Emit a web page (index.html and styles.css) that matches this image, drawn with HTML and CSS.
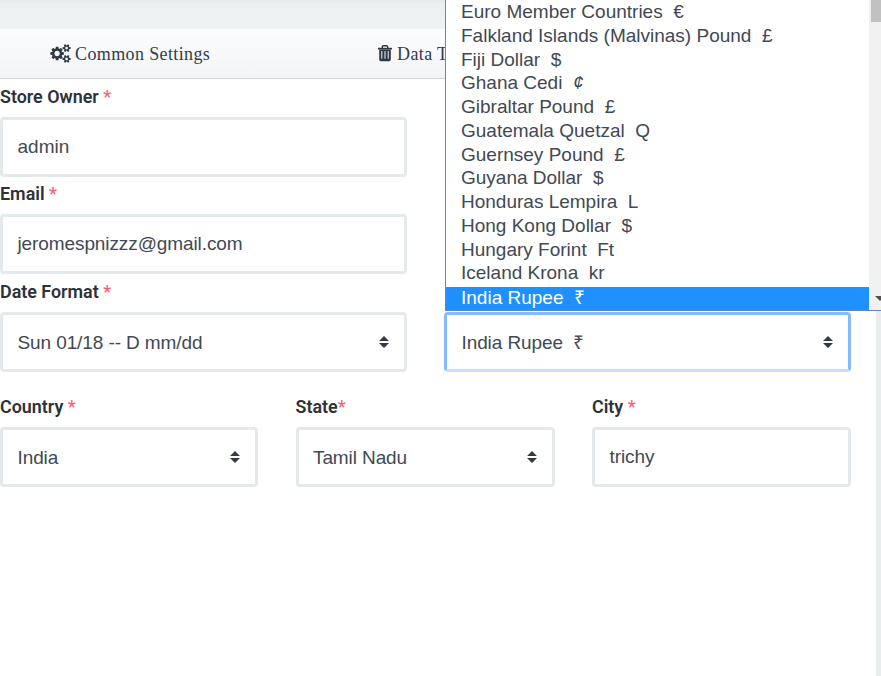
FILE: index.html
```html
<!DOCTYPE html>
<html lang="en">
<head>
<meta charset="utf-8">
<title>Common Settings</title>
<link rel="stylesheet" href="styles.css">
</head>
<body>
<main class="page">
  <div class="band"></div>
  <nav class="tabs">
    <a class="tab"><svg class="cogs" viewBox="0 0 1920 1792"><path d="M896 896q0-106-75-181t-181-75-181 75-75 181 75 181 181 75 181-75 75-181zm768 512q0-52-38-90t-90-38-90 38-38 90q0 53 37.500 90.500t90.500 37.500 90.500-37.500 37.500-90.500zm0-1024q0-52-38-90t-90-38-90 38-38 90q0 53 37.500 90.500t90.500 37.500 90.500-37.500 37.500-90.500zm-384 421v185q0 10-7 19.500t-16 10.500l-155 24q-11 35-32 76 34 48 90 115 7 11 7 20 0 12-7 19-23 30-82.500 89.500t-78.500 59.500q-11 0-21-7l-115-90q-37 19-77 31-11 108-23 155-7 24-30 24h-186q-11 0-20-7.500t-10-17.500l-23-153q-34-10-75-31l-118 89q-7 7-20 7-11 0-21-8-144-133-144-160 0-9 7-19 10-14 41-53t47-61q-23-44-35-82l-152-24q-10-1-17-9.500t-7-19.500v-185q0-10 7-19.500t16-10.500l155-24q11-35 32-76-34-48-90-115-7-11-7-20 0-12 7-20 22-30 82-89t79-59q11 0 21 7l115 90q34-18 77-32 11-108 23-154 7-24 30-24h186q11 0 20 7.500t10 17.500l23 153q34 10 75 31l118-89q8-7 20-7 11 0 21 8 144 133 144 160 0 8-7 19-12 16-42 54t-45 60q23 48 34 82l152 23q10 2 17 10.500t7 19.500zm640 533v140q0 16-149 31-12 27-30 52 51 113 51 138 0 4-4 7-122 71-124 71-8 0-46-47t-52-68q-20 2-30 2t-30-2q-14 21-52 68t-46 47q-2 0-124-71-4-3-4-7 0-25 51-138-18-25-30-52-149-15-149-31v-140q0-16 149-31 13-29 30-52-51-113-51-138 0-4 4-7 4-2 35-20t59-34 30-16q8 0 46 46.500t52 67.500q20-2 30-2t30 2q51-71 92-112l6-2q4 0 124 70 4 3 4 7 0 25-51 138 17 23 30 52 149 15 149 31zm0-1024v140q0 16-149 31-12 27-30 52 51 113 51 138 0 4-4 7-122 71-124 71-8 0-46-47t-52-68q-20 2-30 2t-30-2q-14 21-52 68t-46 47q-2 0-124-71-4-3-4-7 0-25 51-138-18-25-30-52-149-15-149-31v-140q0-16 149-31 13-29 30-52-51-113-51-138 0-4 4-7 4-2 35-20t59-34 30-16q8 0 46 46.500t52 67.500q20-2 30-2t30 2q51-71 92-112l6-2q4 0 124 70 4 3 4 7 0 25-51 138 17 23 30 52 149 15 149 31z"/></svg><span class="tab-text">Common Settings</span></a>
    <a class="tab"><svg class="trash" viewBox="0 0 14 17"><path class="line" d="M4.300 3V2Q4.300.8 5.500.8H8.500Q9.700.8 9.700 2V3"/><path d="M0 2.800H14V4.500H0z"/><path fill-rule="evenodd" d="M1.200 4.500H12.800V14.500Q12.800 16.300 11.200 16.300H2.800Q1.200 16.300 1.200 14.500zM3.300 6V13.800H4.300V6zM6.500 6V13.800H7.500V6zM9.700 6V13.800H10.700V6z"/></svg><span class="tab-text">Data Tax</span></a>
  </nav>
  <form class="form">
    <div class="row halves">
      <div class="column">
        <div class="field"><label>Store Owner <b>*</b></label><div class="box"><span>admin</span></div></div>
        <div class="field"><label>Email <b>*</b></label><div class="box"><span class="tight">jeromespnizzz@gmail.com</span></div></div>
        <div class="field"><label>Date Format <b>*</b></label><div class="box select"><span class="tight">Sun 01/18 -- D mm/dd</span><svg class="arrows" viewBox="0 0 10 12"><path d="M0 5 5 0 10 5zM0 7H10L5 12z"/></svg></div></div>
      </div>
      <div class="column currency">
        <div class="box select focus"><span class="tight">India Rupee &nbsp;₹</span><svg class="arrows" viewBox="0 0 10 12"><path d="M0 5 5 0 10 5zM0 7H10L5 12z"/></svg></div>
      </div>
    </div>
    <div class="row thirds">
      <div class="field"><label>Country <b>*</b></label><div class="box select"><span class="tight">India</span><svg class="arrows" viewBox="0 0 10 12"><path d="M0 5 5 0 10 5zM0 7H10L5 12z"/></svg></div></div>
      <div class="field"><label>State<b>*</b></label><div class="box select"><span class="tight">Tamil Nadu</span><svg class="arrows" viewBox="0 0 10 12"><path d="M0 5 5 0 10 5zM0 7H10L5 12z"/></svg></div></div>
      <div class="field"><label>City <b>*</b></label><div class="box"><span class="tight">trichy</span></div></div>
    </div>
  </form>
</main>
<div class="edge"></div>
<div class="popup">
  <ul class="options">
    <li>Euro Member Countries &nbsp;€</li>
    <li>Falkland Islands (Malvinas) Pound &nbsp;£</li>
    <li>Fiji Dollar &nbsp;$</li>
    <li>Ghana Cedi &nbsp;<i>¢</i></li>
    <li>Gibraltar Pound &nbsp;£</li>
    <li>Guatemala Quetzal &nbsp;Q</li>
    <li>Guernsey Pound &nbsp;£</li>
    <li>Guyana Dollar &nbsp;$</li>
    <li>Honduras Lempira &nbsp;L</li>
    <li>Hong Kong Dollar &nbsp;$</li>
    <li>Hungary Forint &nbsp;Ft</li>
    <li>Iceland Krona &nbsp;kr</li>
    <li class="selected">India Rupee &nbsp;₹</li>
  </ul>
  <div class="scroll"><i class="thumb"></i><svg class="down" viewBox="0 0 10 5"><path d="M0 0H10L5 5z"/></svg></div>
</div>
</body>
</html>
```
FILE: styles.css
```css
* { box-sizing: border-box; }
body {
  margin: 0;
  height: 676px;
  display: flex;
  overflow: hidden;
  position: relative;
  background: #fff;
  color: #414954;
  font: 19px/24px "Liberation Sans", sans-serif;
}
.page { width: 876px; flex: none; }
.edge { width: 5px; background: #e9edee; }
.band { height: 29px; background: linear-gradient(#e5e9eb, #ecf0f1 5px, #eef2f3); }
.tabs {
  height: 50px;
  display: grid;
  grid-template-columns: 327px 1fr;
  padding-left: 50px;
  background: linear-gradient(#fbfcfd, #f3f4f6);
  border-bottom: 1px solid #d3d7da;
  color: #343c47;
}
.tab { display: flex; align-items: center; font: 18px/24px "Liberation Serif", serif; }
.tab:last-child { padding-left: 1px; }
.tab svg { fill: #2f3944; flex: none; }
.tab-text { letter-spacing: .38px; }
.cogs { width: 21px; height: 19px; margin-right: 4px; }
.trash { width: 14px; height: 17px; margin-right: 5px; }
.trash .line { fill: none; stroke: #2f3944; stroke-width: 1.4; }
.row { display: grid; width: 851px; }
.halves { grid-template-columns: 407px 407px; column-gap: 37px; }
.thirds { grid-template-columns: 258px 259px 259px; column-gap: 37.500px; justify-content: start; margin-top: 17px; }
.column { display: flex; flex-direction: column; }
.currency { justify-content: flex-end; }
.field { padding-top: 6px; }
.halves .field { height: 97.400px; }
.halves .field:last-child { height: 98.200px; }
label { display: block; height: 32px; color: #2e3238; font: 600 17.900px/24px Roboto, sans-serif; }
label b { color: #f9626f; font-weight: 500; }
.box {
  height: 60px;
  border: 3px solid #e4eaec;
  border-radius: 4px;
  padding: 0 15px 0 14.500px;
  display: flex;
  align-items: center;
  justify-content: space-between;
  white-space: pre;
}
.select span { padding-top: 2px; }
.tight { letter-spacing: -.1px; }
.focus { border-color: #80bdff; border-bottom-color: #c8defa; }
.arrows { width: 10px; height: 12px; fill: #343a40; }
.popup {
  position: absolute;
  left: 445px;
  top: 0;
  width: 436px;
  height: 311px;
  display: flex;
  background: #fff;
  border-left: 1px solid #6c86ae;
  border-bottom: 1px solid #6485bb;
}
.options { width: 423px; margin: 0; padding: 2px 0 0; list-style: none; flex: none; }
.options li { height: 23.750px; line-height: 20px; padding-left: 15px; white-space: pre; }
.options .selected { height: 23px; line-height: 21.500px; background: #1e90ff; color: #fff; }
.scroll { flex: 1; background: #f0f0f0; display: flex; flex-direction: column; justify-content: space-between; overflow: hidden; }
.thumb { height: 22px; margin-left: 2px; background: #c1c1c1; }
.down { width: 10px; height: 5px; flex: none; margin: 0 0 9px 6px; fill: #505050; }
```
